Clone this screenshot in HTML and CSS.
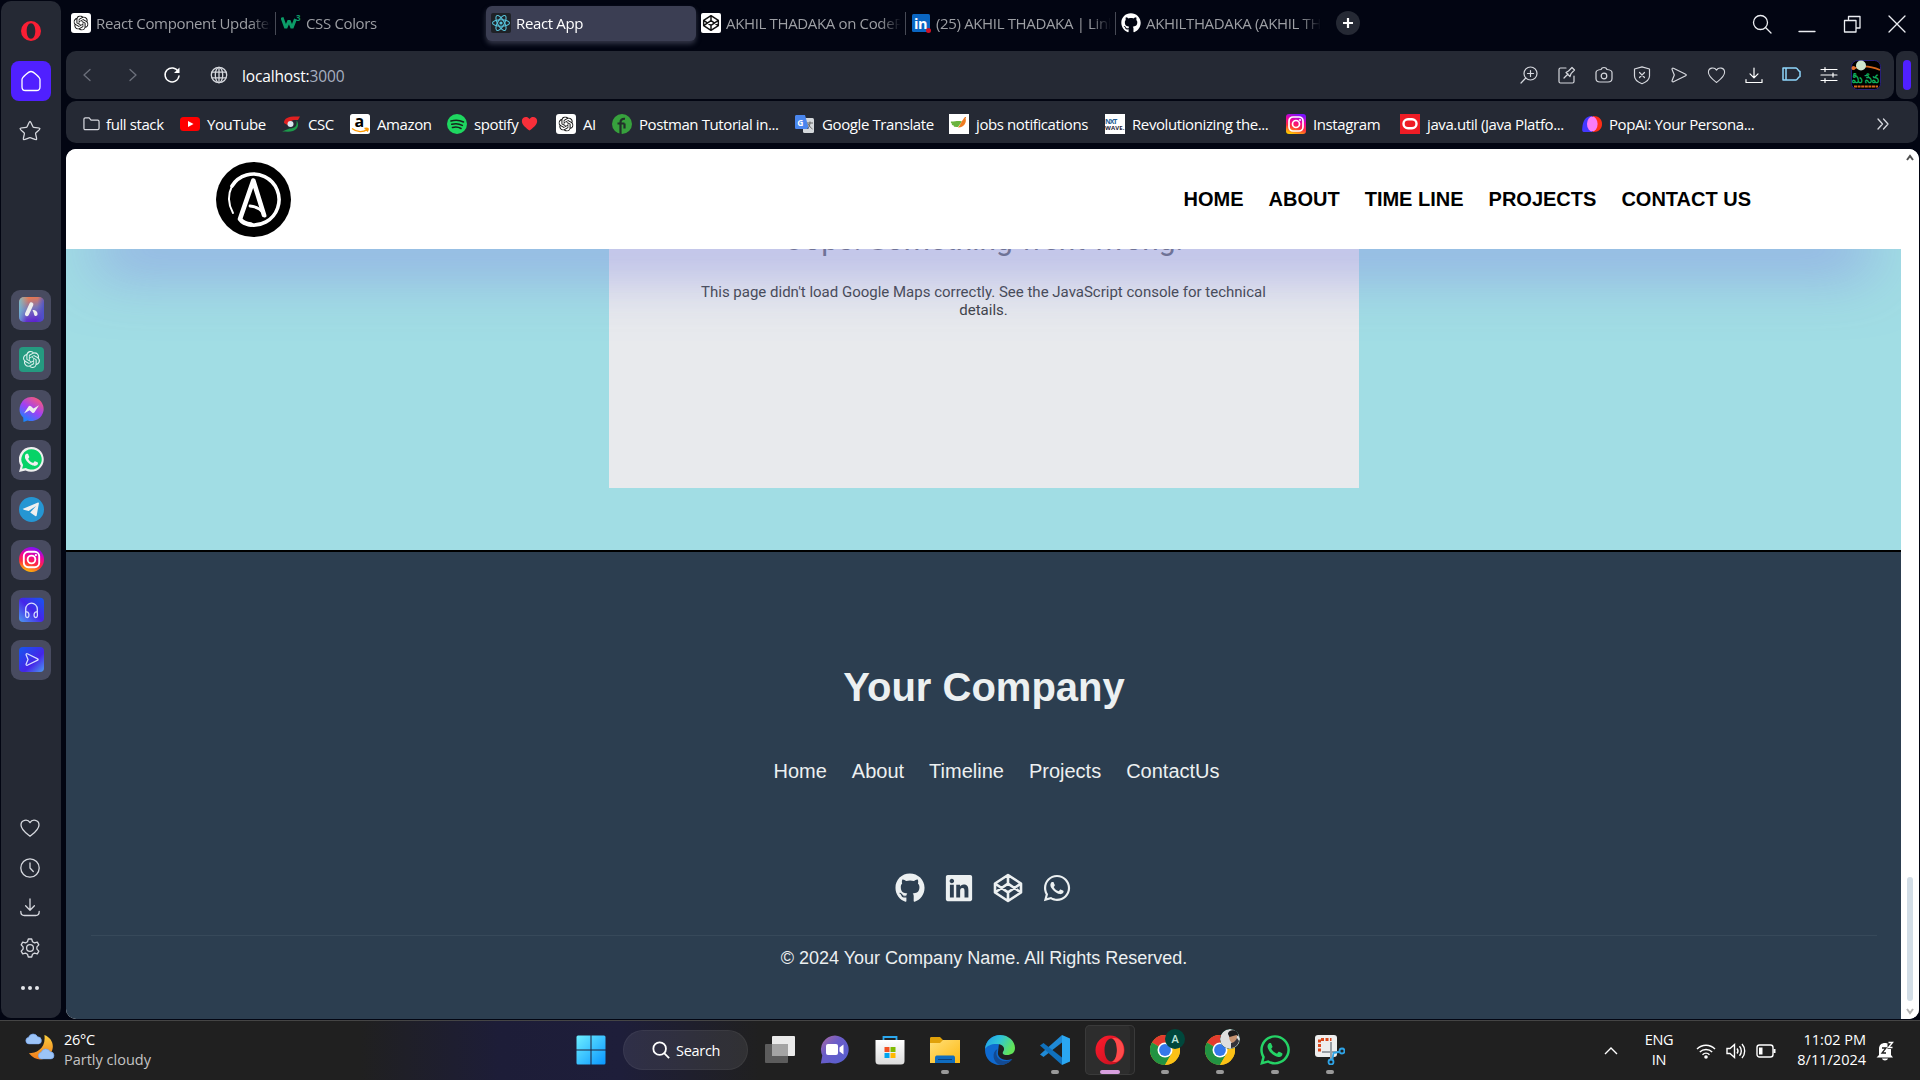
FILE: index.html
```html
<!DOCTYPE html>
<html lang="en">
<head>
<meta charset="utf-8">
<title>React App</title>
<link rel="stylesheet" href="styles.css">
</head>
<body>
<svg class="defs" width="0" height="0">
  <defs>
    <linearGradient id="g-insta" x1=".3" y1="1" x2=".6" y2="0"><stop offset="0" stop-color="#ffc800"/><stop offset=".35" stop-color="#ff2d3d"/><stop offset=".65" stop-color="#f0039c"/><stop offset="1" stop-color="#7a12ff"/></linearGradient>
    <linearGradient id="g-mess" x1=".2" y1="1" x2=".8" y2="0"><stop offset="0" stop-color="#0a8cff"/><stop offset=".5" stop-color="#a040f5"/><stop offset="1" stop-color="#ff5c70"/></linearGradient>
    <linearGradient id="g-aria" x1=".4" y1="0" x2=".6" y2="1"><stop offset="0" stop-color="#f0784a"/><stop offset=".45" stop-color="#7a78b8"/><stop offset="1" stop-color="#5c20d0"/></linearGradient>
    <linearGradient id="g-ariaL" x1="0" y1=".5" x2="1" y2=".6"><stop offset="0" stop-color="#6ec3d8" stop-opacity=".8"/><stop offset=".35" stop-color="#6ec3d8" stop-opacity="0"/><stop offset=".7" stop-color="#4c52c8" stop-opacity="0"/><stop offset="1" stop-color="#4c52c8"/></linearGradient>
    <linearGradient id="g-blue" x1="0" y1="1" x2="1" y2="0"><stop offset="0" stop-color="#4d9bf0"/><stop offset=".5" stop-color="#4525e8"/><stop offset="1" stop-color="#1558f0"/></linearGradient>
    <linearGradient id="g-blue2" x1="0" y1="0" x2="1" y2="1"><stop offset="0" stop-color="#1558f0"/><stop offset=".6" stop-color="#4525e8"/><stop offset="1" stop-color="#4d9bf0"/></linearGradient>
    <linearGradient id="g-win" gradientUnits="userSpaceOnUse" x1="0" y1="0" x2="30" y2="30"><stop offset="0" stop-color="#6ff0ff"/><stop offset="1" stop-color="#0794ff"/></linearGradient>
    <linearGradient id="g-teams" x1="0" y1="0" x2="1" y2="1"><stop offset="0" stop-color="#b06a9e"/><stop offset=".4" stop-color="#6a5cc8"/><stop offset="1" stop-color="#5560d0"/></linearGradient>
    <linearGradient id="g-folder" x1="0" y1="0" x2="1" y2="1"><stop offset="0" stop-color="#ffdf78"/><stop offset="1" stop-color="#fdb913"/></linearGradient>
    <linearGradient id="g-edge" x1="0" y1="0" x2="1" y2=".4"><stop offset="0" stop-color="#1f9bea"/><stop offset=".5" stop-color="#2fc4d8"/><stop offset="1" stop-color="#62e45a"/></linearGradient>
    <linearGradient id="g-opera" x1="0" y1="0" x2="1" y2="1"><stop offset="0" stop-color="#ff1b2d"/><stop offset="1" stop-color="#c0101e"/></linearGradient>
    <linearGradient id="g-moon" x1="0" y1="0" x2="0" y2="1"><stop offset="0" stop-color="#fccf3e"/><stop offset="1" stop-color="#f07a1a"/></linearGradient>
    <linearGradient id="g-store" x1="0" y1="0" x2="0" y2="1"><stop offset="0" stop-color="#fff"/><stop offset="1" stop-color="#dcdcdc"/></linearGradient>
    <symbol id="openai" viewBox="0 0 24 24"><path d="M22.2819 9.8211a5.9847 5.9847 0 0 0-.5157-4.9108 6.0462 6.0462 0 0 0-6.5098-2.9A6.0651 6.0651 0 0 0 4.9807 4.1818a5.9847 5.9847 0 0 0-3.9977 2.9 6.0462 6.0462 0 0 0 .7427 7.0966 5.98 5.98 0 0 0 .511 4.9107 6.051 6.051 0 0 0 6.5146 2.9001A5.9847 5.9847 0 0 0 13.2599 24a6.0557 6.0557 0 0 0 5.7718-4.2058 5.9894 5.9894 0 0 0 3.9977-2.9001 6.0557 6.0557 0 0 0-.7475-7.0729zm-9.022 12.6081a4.4755 4.4755 0 0 1-2.8764-1.0408l.1419-.0804 4.7783-2.7582a.7948.7948 0 0 0 .3927-.6813v-6.7369l2.02 1.1686a.071.071 0 0 1 .038.052v5.5826a4.504 4.504 0 0 1-4.4945 4.4944zm-9.6607-4.1254a4.4708 4.4708 0 0 1-.5346-3.0137l.142.0852 4.783 2.7582a.7712.7712 0 0 0 .7806 0l5.8428-3.3685v2.3324a.0804.0804 0 0 1-.0332.0615L9.74 19.9502a4.4992 4.4992 0 0 1-6.1408-1.6464zM2.3408 7.8956a4.485 4.485 0 0 1 2.3655-1.9728V11.6a.7664.7664 0 0 0 .3879.6765l5.8144 3.3543-2.0201 1.1685a.0757.0757 0 0 1-.071 0l-4.8303-2.7865A4.504 4.504 0 0 1 2.3408 7.872zm16.5963 3.8558L13.1038 8.364 15.1192 7.2a.0757.0757 0 0 1 .071 0l4.8303 2.7913a4.4944 4.4944 0 0 1-.6765 8.1042v-5.6772a.79.79 0 0 0-.407-.667zm2.0107-3.0231l-.142-.0852-4.7735-2.7818a.7759.7759 0 0 0-.7854 0L9.409 9.2297V6.8974a.0662.0662 0 0 1 .0284-.0615l4.8303-2.7866a4.4992 4.4992 0 0 1 6.6802 4.66zM8.3065 12.863l-2.02-1.1638a.0804.0804 0 0 1-.038-.0567V6.0742a4.4992 4.4992 0 0 1 7.3757-3.4537l-.142.0805L8.704 5.459a.7948.7948 0 0 0-.3927.6813zm1.0976-2.3654l2.602-1.4998 2.6069 1.4998v2.9994l-2.5974 1.4997-2.6067-1.4997Z"/></symbol>
    <symbol id="openai-tile" viewBox="0 0 20 20"><rect width="20" height="20" rx="3" fill="#fff"/><use href="#openai" x="2.5" y="2.5" width="15" height="15" fill="#111"/></symbol>
    <symbol id="codepen" viewBox="0 0 30 30"><path d="M15 2 28 10.5v9L15 28 2 19.500v-9zM15 2v8.700M15 28v-8.700M2 10.500 15 19.300 28 10.500M2 19.500 15 10.700 28 19.500" fill="none" stroke="currentColor" stroke-width="2.6" stroke-linejoin="round"/></symbol>
    <symbol id="send" viewBox="0 0 20 20"><path d="M4.500 3.300C3.600 2.800 2.700 3.600 3.100 4.600L5.300 10 3.100 15.400c-.4 1 .5 1.800 1.400 1.300L16.700 10.700c.7-.3.7-1.100 0-1.400z"/></symbol>
    <symbol id="heart" viewBox="0 0 20 20"><path d="M10 18.300C6.500 15.500 1 11.800 1 7 1 1.800 7.600.6 10 4.600 12.400.6 19 1.800 19 7c0 4.800-5.500 8.500-9 11.300z"/></symbol>
    <symbol id="whatsapp" viewBox="0 0 448 512"><path d="M380.9 97.1C339 55.1 283.2 32 223.9 32c-122.400 0-222 99.600-222 222 0 39.100 10.200 77.300 29.600 111L0 480l117.700-30.900c32.400 17.700 68.900 27 106.100 27h.1c122.300 0 224.100-99.600 224.100-222 0-59.300-25.200-115-67.100-157zm-157 341.600c-33.200 0-65.700-8.900-94-25.700l-6.700-4-69.800 18.300L72 359.200l-4.400-7c-18.500-29.400-28.200-63.300-28.200-98.200 0-101.700 82.800-184.500 184.600-184.500 49.300 0 95.600 19.200 130.400 54.100 34.800 34.900 56.200 81.200 56.100 130.500 0 101.800-84.900 184.600-186.600 184.600zm101.200-138.200c-5.500-2.800-32.800-16.200-37.900-18-5.100-1.900-8.800-2.800-12.500 2.800-3.700 5.600-14.300 18-17.600 21.800-3.200 3.700-6.500 4.200-12 1.400-32.600-16.300-54-29.100-75.500-66-5.700-9.800 5.700-9.100 16.300-30.300 1.800-3.700.9-6.900-.5-9.700-1.400-2.800-12.500-30.100-17.100-41.200-4.500-10.800-9.100-9.300-12.500-9.500-3.200-.2-6.900-.2-10.600-.2-3.700 0-9.700 1.400-14.800 6.900-5.100 5.600-19.400 19-19.400 46.300 0 27.300 19.900 53.700 22.600 57.400 2.800 3.700 39.100 59.700 94.800 83.800 35.200 15.200 49 16.500 66.600 13.900 10.700-1.600 32.800-13.400 37.400-26.400 4.600-13 4.600-24.100 3.200-26.400-1.300-2.500-5-3.900-10.500-6.600z"/></symbol>
    <symbol id="wa-phone" viewBox="110 140 240 240"><path d="M325.100 300.500c-5.500-2.800-32.800-16.200-37.900-18-5.100-1.900-8.800-2.800-12.500 2.800-3.700 5.600-14.300 18-17.600 21.800-3.200 3.700-6.500 4.200-12 1.400-32.600-16.300-54-29.100-75.500-66-5.700-9.800 5.700-9.100 16.300-30.300 1.800-3.700.9-6.900-.5-9.700-1.400-2.800-12.500-30.100-17.100-41.200-4.500-10.800-9.100-9.300-12.500-9.500-3.200-.2-6.900-.2-10.600-.2-3.700 0-9.700 1.400-14.800 6.900-5.100 5.600-19.400 19-19.400 46.300 0 27.300 19.900 53.700 22.600 57.400 2.800 3.700 39.100 59.700 94.800 83.800 35.200 15.200 49 16.500 66.600 13.900 10.700-1.600 32.800-13.400 37.400-26.400 4.600-13 4.600-24.100 3.200-26.400-1.300-2.500-5-3.900-10.500-6.600z"/></symbol>
    <symbol id="github" viewBox="0 0 496 512"><path d="M165.900 397.400c0 2-2.300 3.600-5.200 3.600-3.300.3-5.600-1.300-5.600-3.600 0-2 2.300-3.600 5.200-3.600 3-.3 5.600 1.300 5.600 3.600zm-31.100-4.500c-.7 2 1.300 4.300 4.300 4.900 2.600 1 5.600 0 6.200-2s-1.300-4.300-4.300-5.200c-2.600-.7-5.500.3-6.200 2.300zm44.200-1.700c-2.900.7-4.900 2.600-4.600 4.900.3 2 2.900 3.300 5.900 2.600 2.900-.7 4.900-2.600 4.600-4.600-.3-1.900-3-3.200-5.900-2.900zM244.800 8C106.100 8 0 113.300 0 252c0 110.900 69.800 205.800 169.500 239.200 12.800 2.300 17.300-5.600 17.300-12.100 0-6.200-.3-40.400-.3-61.400 0 0-70 15-84.700-29.800 0 0-11.400-29.100-27.800-36.600 0 0-22.900-15.700 1.600-15.400 0 0 24.900 2 38.600 25.800 21.900 38.600 58.600 27.500 72.900 20.900 2.300-16 8.800-27.100 16-33.700-55.900-6.200-112.300-14.300-112.300-110.500 0-27.500 7.600-41.300 23.600-58.900-2.600-6.500-11.100-33.300 2.600-67.900 20.900-6.500 69 27 69 27 20-5.600 41.500-8.500 62.800-8.500s42.800 2.900 62.800 8.500c0 0 48.100-33.600 69-27 13.700 34.700 5.200 61.400 2.600 67.900 16 17.700 25.800 31.500 25.800 58.900 0 96.500-58.900 104.200-114.800 110.500 9.200 7.900 17 22.900 17 46.400 0 33.700-.3 75.400-.3 83.600 0 6.500 4.600 14.400 17.300 12.100C428.200 457.800 496 362.900 496 252 496 113.300 383.500 8 244.800 8z"/></symbol>
    <symbol id="insta" viewBox="0 0 20 20"><g fill="none" stroke="#fff" stroke-width="1.700"><rect x="3" y="3" width="14" height="14" rx="4"/><circle cx="10" cy="10" r="3.500"/></g><circle cx="14" cy="6" r="1" fill="#fff"/></symbol>
    <symbol id="chrome" viewBox="0 0 30 30"><circle cx="15" cy="15" r="15" fill="#fbc116"/><path d="M15 15 2 7.500A15 15 0 0 1 28 7.500H15z" fill="#e33b2e"/><path d="M2 7.500A15 15 0 0 0 15 30L21.500 18.800 15 15z" fill="#229342"/><path d="M15 7.500H28A15 15 0 0 1 15 30l6.500-11.200z" fill="#fbc116"/><circle cx="15" cy="15" r="7.500" fill="#fff"/><circle cx="15" cy="15" r="5.900" fill="#3578ea"/></symbol>
    <symbol id="download" viewBox="0 0 20 20"><path d="M10 1v11M5.600 7.800 10 12.200l4.400-4.400M.8 13.500c0 3 1 4 3.500 4h11.400c2.500 0 3.500-1 3.500-4"/></symbol>
    <symbol id="magnify" viewBox="0 0 20 20"><circle cx="8.500" cy="8.500" r="7"/><path d="m13.500 13.500 5.500 5.500"/></symbol>
    <symbol id="cloud" viewBox="0 0 18 12"><path d="M4 11.500a3.600 3.600 0 0 1-.3-7.100A5 5 0 0 1 13 4a3.800 3.800 0 0 1 1 7.500z" fill="#9cc4f8" stroke="#76a4ec" stroke-width=".7"/></symbol>
  </defs>
</svg>
<div class="desktop">
  <div class="browser">
    <aside class="sidebar">
      <svg class="opera-mark" viewBox="0 0 20 20"><path fill="#fa1e34" fill-rule="evenodd" d="M10 0a10 10 0 1 0 0 20A10 10 0 0 0 10 0zm0 2.300c2.600 0 4.300 3.200 4.300 7.700s-1.700 7.700-4.300 7.700S5.700 14.500 5.700 10 7.400 2.300 10 2.300z"/></svg>
      <div class="home-btn"><svg class="line i22" viewBox="0 0 22 22"><path d="M2 9.500C2 7.500 8.500 1.500 11 1.500S20 7.500 20 9.500V17c0 2.500-1 3.500-3.500 3.500h-11C3 20.500 2 19.500 2 17z"/></svg></div>
      <svg class="line i22 star" viewBox="0 0 22 22"><path d="M11 1.500c1 0 2.600 5.200 3.300 5.700s6.300.3 6.600 1.300-4 3.900-4.300 4.800 1.700 5.700.9 6.300-5.300-2-6.500-2-5.700 2.600-6.500 2 1.200-5.400.9-6.300S.8 9.500 1.100 8.500s5.900-.8 6.600-1.300S10 1.500 11 1.500z"/></svg>
      <div class="apps">
        <div class="tile"><svg viewBox="0 0 25 25"><rect width="25" height="25" rx="5" fill="url(#g-aria)"/><rect width="25" height="25" rx="5" fill="url(#g-ariaL)"/><path d="M12.300 7.500 8 17" stroke="#eee" stroke-width="4.200" stroke-linecap="round"/><path d="M13.500 13c3-.5 5.500 2 5 4.500-.4 2-3 1.800-3.300.2-.3-1.800-1-3-1.700-4.700z" fill="#eee"/></svg></div>
        <div class="tile"><svg viewBox="0 0 25 25"><rect width="25" height="25" rx="4" fill="#259a80"/><use href="#openai" x="4" y="4" width="17" height="17" fill="#dff2ee"/></svg></div>
        <div class="tile"><svg viewBox="0 0 25 25"><path d="M12.500 0a12.300 12 0 1 1-4 23.400L4.500 25l-.3-4.500A12 12 0 0 1 12.500 0z" fill="url(#g-mess)"/><path d="M5 16.500 9.500 9.500c.7-.9 1.700-.9 2.500-.2l2.500 2.200 5.500-3.300-4.500 7c-.7.9-1.700.9-2.500.2l-2.500-2.200z" fill="#eee"/></svg></div>
        <div class="tile"><svg viewBox="0 0 25 25"><path d="M12.500 0A12.400 12.400 0 1 1 6.600 23.400L0 25l1.700-6.200A12.400 12.400 0 0 1 12.500 0z" fill="#efefef"/><path d="M12.500 2.200a10.200 10.200 0 1 1-5.600 18.700l-3.800.9 1-3.700A10.200 10.200 0 0 1 12.500 2.200z" fill="#06d367"/><use href="#wa-phone" x="5.800" y="6" width="14" height="14" fill="#efefef"/></svg></div>
        <div class="tile"><svg viewBox="0 0 25 25"><circle cx="12.500" cy="12.500" r="12.500" fill="#2596d3"/><path d="M3.500 12 19 5.600c.6-.2 1 .1.900.8l-2.200 12c-.2.900-.8 1-1.500.5l-5-3.500 6-6.500-7.500 5-5-1.200c-.8-.2-.8-.5 0-.7z" fill="#efefef"/></svg></div>
        <div class="tile"><svg viewBox="0 0 25 25"><circle cx="12.500" cy="12.500" r="12.500" fill="url(#g-insta)"/><use href="#insta" x="1.500" y="1.500" width="22" height="22"/></svg></div>
        <div class="tile"><svg viewBox="0 0 25 25"><rect y=".8" width="25" height="24.200" rx="4" fill="url(#g-blue)"/><path d="M6.700 15.500V12a5.800 5.800 0 0 1 11.600 0v3.500M6.700 15c3.700-1.500 4.200 5.500 1.700 5.500S6.700 17 6.700 15zM18.300 15c-3.700-1.500-4.200 5.500-1.700 5.500s1.700-3.500 1.700-5.500z" fill="none" stroke="#d5ddff" stroke-width="1.300"/></svg></div>
        <div class="tile"><svg viewBox="0 0 25 25"><rect width="25" height="25" rx="4" fill="url(#g-blue2)"/><use href="#send" x="4.500" y="4" width="17" height="17" fill="none" stroke="#d5ddff" stroke-width="1.500"/></svg></div>
      </div>
      <div class="side-tools">
        <svg class="line i20"><use href="#heart"/></svg>
        <svg class="line i20" viewBox="0 0 20 20"><circle cx="10" cy="10" r="9.200"/><path d="M10 5v5l3.300 3.500"/></svg>
        <svg class="line i20"><use href="#download"/></svg>
        <svg class="line i20" viewBox="0 0 20 20"><path d="M8.300 1h3.400l.8 2.800 2 1.100 2.800-.8 1.500 2.800-1.900 2v2.200l1.900 2-1.500 2.800-2.800-.8-2 1.100-.8 2.800H8.300l-.8-2.800-2-1.100-2.800.8-1.500-2.800 1.900-2V8.900l-1.900-2 1.500-2.800 2.800.8 2-1.100z"/><circle cx="10" cy="10" r="3.400"/></svg>
        <svg class="i20" viewBox="0 0 20 20" fill="#e4e5e9"><circle cx="3" cy="10" r="2"/><circle cx="10" cy="10" r="2"/><circle cx="17" cy="10" r="2"/></svg>
      </div>
    </aside>
    <div class="window">
      <div class="tabs">
        <div class="tab sep"><svg class="fav"><use href="#openai-tile"/></svg><span>React Component Updates</span></div>
        <div class="tab"><svg class="fav" viewBox="0 0 20 20"><path d="M1 4.500 4.800 15 8 7.500 11 15 14.500 6" fill="none" stroke="#0c9c68" stroke-width="3" stroke-linejoin="bevel"/><text x="15" y="8" font-size="8" font-weight="bold" fill="#0c9c68" font-family="Open Sans">3</text></svg><span>CSS Colors</span></div>
        <div class="tab active"><svg class="fav" viewBox="0 0 20 20"><rect width="20" height="20" rx="2" fill="#1f2227"/><g fill="none" stroke="#58c4dc" stroke-width="1.100"><ellipse cx="10" cy="10" rx="8.500" ry="3.300"/><ellipse cx="10" cy="10" rx="8.500" ry="3.300" transform="rotate(60 10 10)"/><ellipse cx="10" cy="10" rx="8.500" ry="3.300" transform="rotate(120 10 10)"/></g><circle cx="10" cy="10" r="1.600" fill="#58c4dc"/></svg><span>React App</span></div>
        <div class="tab sep"><svg class="fav" viewBox="0 0 20 20"><rect width="20" height="20" rx="2" fill="#fff"/><use href="#codepen" x="1.500" y="1.500" width="17" height="17" color="#111"/></svg><span>AKHIL THADAKA on CodePen</span></div>
        <div class="tab sep"><svg class="fav" viewBox="0 0 20 20"><rect x="1" y="1" width="18" height="18" rx="1.500" fill="#0a66c2"/><text x="3" y="15.500" font-size="14.500" font-weight="bold" fill="#fff" font-family="Open Sans">in</text><circle cx="17.500" cy="17.500" r="2.500" fill="#d11124"/></svg><span>(25) AKHIL THADAKA | LinkedIn</span></div>
        <div class="tab"><svg class="fav" fill="#fff"><use href="#github"/></svg><span>AKHILTHADAKA (AKHIL THADAKA)</span></div>
        <div class="new-tab"><svg viewBox="0 0 24 24" stroke="#fff" stroke-width="2.200"><path d="M12 7v10M7 12h10"/></svg></div>
        <div class="controls">
          <svg class="line" viewBox="0 0 20 20"><use href="#magnify"/></svg>
          <svg class="line" viewBox="0 0 20 20"><path d="M2 17.500h16"/></svg>
          <svg class="line" viewBox="0 0 20 20"><path d="M2.500 6.500h11.500v11.500H2.500zM6.500 6.500V2.500H18v11.500h-4"/></svg>
          <svg class="line" viewBox="0 0 20 20"><path d="m2 2 16 16M18 2 2 18"/></svg>
        </div>
      </div>
      <div class="toolbar-row">
        <div class="toolbar">
          <svg class="line dim nav-ic" viewBox="0 0 20 20"><path d="M13 4.500 7 10l6 5.500"/></svg>
          <svg class="line dim nav-ic" viewBox="0 0 20 20"><path d="m7 4.500 6 5.500-6 5.500"/></svg>
          <svg class="line reload" viewBox="0 0 20 20"><path d="M16.200 6.500A7 7 0 1 0 17 11" stroke-width="1.500"/><path d="M17.500 2.500V8H12z" fill="#fff" stroke="none"/></svg>
          <svg class="line globe" viewBox="0 0 20 20"><circle cx="10" cy="10" r="7.700"/><ellipse cx="10" cy="10" rx="3.700" ry="7.700"/><path d="M10 2.300v15.400M3 7.200h14M3 12.800h14"/></svg>
          <div class="url"><span class="host">localhost:</span><span class="port">3000</span></div>
          <div class="actions">
            <svg class="line" viewBox="0 0 20 20"><circle cx="11.500" cy="8.500" r="6.500"/><path d="M6.800 13 2 18M11.500 5.500v6M8.500 8.500h6"/></svg>
            <svg class="line" viewBox="0 0 20 20"><path d="M9 3H3.500C2.500 3 2 3.500 2 4.500v12c0 1 .5 1.500 1.500 1.500h12c1 0 1.500-.5 1.500-1.500V11M7 13l4-4M9 7.500l4 4 1-2.800L17.500 5 15 2.500 11.500 6z"/></svg>
            <svg class="line" viewBox="0 0 20 20"><path d="M7 4.500c.5-1.500 1-2 3-2s2.500.5 3 2c3.500.3 5 .7 5 3v6c0 2.500-1.500 3.500-4 3.500H6c-2.500 0-4-1-4-3.500v-6c0-2.300 1.500-2.700 5-3z"/><circle cx="10" cy="11" r="2.800"/></svg>
            <svg class="line" viewBox="0 0 20 20"><path d="M10 1.800 17.500 4v7c0 3.500-4.500 6.500-7.500 7.700C7 17.500 2.500 14.500 2.500 11V4zM7.500 7.500l5 5M12.500 7.500l-5 5"/></svg>
            <svg class="line"><use href="#send"/></svg>
            <svg class="line"><use href="#heart" x="0" y="1" width="19" height="18"/></svg>
            <svg class="line white" viewBox="0 0 20 20"><path d="M10 3v9.500M6 8.800l4 4 4-4M2 14.500v3h16v-3"/></svg>
            <svg class="line sky" viewBox="0 0 20 20"><path d="M1 3h13c1.500 0 1.800 3 4 3.500v5c-2.200.5-2.500 3.500-4 3.500H1zM4 3v12" stroke-width="1.500"/></svg>
            <svg class="line white" viewBox="0 0 20 20"><path d="M2 4.500h16M2 10h16M2 15.500h16M6 2.500v4M14 8v4M6 13.500v4"/></svg>
          </div>
          <svg class="avatar" viewBox="0 0 30 30"><rect x=".5" y=".5" width="29" height="29" rx="6" fill="#000" stroke="#28207a"/><path d="M1 9C12 4 22 7 29 10" fill="none" stroke="#d8661c" stroke-width="1.800"/><circle cx="10" cy="5.500" r="5" fill="#cfe6cf"/><circle cx="2.500" cy="8" r="2" fill="#e07030"/><text x="1" y="23" font-size="11.500" font-weight="bold" fill="#0fae5c" textLength="27" lengthAdjust="spacingAndGlyphs">మీ సేవ</text><path d="M3 26.500h24" stroke="#d8661c" stroke-width="2" stroke-dasharray="3 .6"/></svg>
        </div>
        <div class="side-toggle"><i></i></div>
      </div>
      <div class="bookmarks">
        <div class="bm"><svg class="line folder" viewBox="0 0 18 18"><path d="M1 4c0-1 .5-1.500 1.500-1.500h4L8.500 5h7c1 0 1.500.5 1.500 1.500v7c0 1-.5 1.500-1.500 1.500h-13c-1 0-1.500-.5-1.500-1.500z"/></svg><span>full stack</span></div>
        <div class="bm"><svg viewBox="0 0 20 20"><rect y="3" width="20" height="14" rx="3.500" fill="#f00"/><path d="m8 7 5.500 3L8 13z" fill="#fff"/></svg><span>YouTube</span></div>
        <div class="bm"><svg viewBox="0 0 20 20"><path d="M3 9C3 3 9 2 19 2.500L17 6c-6 0-8 0-9 6z" fill="#e02020"/><path d="M1 17.500c4 0 8 .5 11-.5 6-2 6-8 3.500-10.500 1 6-2 8-7 8z" fill="#1d9a4b"/><circle cx="9.500" cy="10" r="3" fill="#dce6f0"/></svg><span>CSC</span></div>
        <div class="bm"><svg viewBox="0 0 20 20"><rect width="20" height="20" rx="2.500" fill="#fff"/><text x="4.500" y="13" font-size="16" font-weight="bold" font-family="Open Sans" fill="#000">a</text><path d="M2 14.500c5 4 11 4 15.500.8M14.500 14.500c1.500-.3 3-.5 3.500 0s-.2 2-.8 3" fill="none" stroke="#f90" stroke-width="1.500"/></svg><span>Amazon</span></div>
        <div class="bm"><svg viewBox="0 0 20 20"><circle cx="10" cy="10" r="10" fill="#1ed760"/><path d="M4 7c4-1.200 9-.8 12.500 1M4.800 10.300c3.500-1 7.500-.6 10.500 1.100M5.500 13.500c3-.8 6-.5 8.500 1" fill="none" stroke="#16251c" stroke-width="1.600" stroke-linecap="round"/></svg><span>spotify</span><svg class="red-heart" viewBox="0 0 20 20"><use href="#heart" fill="#f92f3a"/></svg></div>
        <div class="bm"><svg><use href="#openai-tile"/></svg><span>AI</span></div>
        <div class="bm"><svg viewBox="0 0 20 20"><circle cx="10" cy="10" r="10" fill="#37a13d"/><path d="M8.500 20V8.500C8.500 6 10 4.500 13 4.800M5.500 9.500h7M12.500 9.500v5" fill="none" stroke="#22302a" stroke-width="2.200"/></svg><span>Postman Tutorial in...</span></div>
        <div class="bm"><svg viewBox="0 0 20 20"><rect x="8" y="4" width="11" height="15" rx="1.500" fill="#d5d8dc"/><path d="M1.500 1H10l4 14H1.500C.7 15 0 14.500 0 13.500v-11C0 1.500.7 1 1.500 1z" fill="#4a86ee"/><text x="2.200" y="11.500" font-size="8.500" font-weight="bold" font-family="Open Sans" fill="#fff">G</text><path d="M12 9h6M15 7.500V9c0 3-2 5-3 6M13 10c1 2 3 4 4.500 5" stroke="#666" fill="none"/></svg><span>Google Translate</span></div>
        <div class="bm"><svg viewBox="0 0 20 20"><rect width="20" height="20" fill="#fff"/><path d="M2 7.500c5 0 7-1 11 0L9 13c-3 0-5-.5-4-1.500-2 0-3-1.500-1.500-1.500C2 9.500 1.500 8 2 7.500z" fill="#6ab43e"/><path d="M9 13.500c3-3 3-6 5.500-8.500C16 2 18 3 16.500 4.500 18 8 15 14 9 13.500z" fill="#ee7b22"/></svg><span>jobs notifications</span></div>
        <div class="bm"><svg viewBox="0 0 20 20"><rect width="20" height="20" fill="#fff"/><g font-family="Open Sans" font-weight="bold" font-size="7" fill="#245c94"><text x="0" y="9.500" textLength="12">NXT</text><text x="0" y="15.500" textLength="19" font-size="6" fill="#223">WAVE.</text></g></svg><span>Revolutionizing the...</span></div>
        <div class="bm"><svg viewBox="0 0 20 20"><rect width="20" height="20" rx="3" fill="url(#g-insta)"/><use href="#insta"/></svg><span>Instagram</span></div>
        <div class="bm"><svg viewBox="0 0 20 20"><rect width="20" height="20" fill="#ee1c25"/><rect x="3.500" y="5.300" width="13" height="9" rx="4.500" fill="none" stroke="#fff" stroke-width="2.400"/></svg><span>java.util (Java Platfo...</span></div>
        <div class="bm"><svg viewBox="0 0 20 20"><path d="M10 2v16H2c-2 0-2-2-1.700-4C1 7 3 2 10 2z" fill="#4338ff"/><path d="M11 2c6 0 9 3.500 9 8s-3 8-9 8z" fill="#ff2d16"/><ellipse cx="10.300" cy="10" rx="5.300" ry="7.500" fill="#f97cf8"/></svg><span>PopAi: Your Persona...</span></div>
        <svg class="line more" viewBox="0 0 14 14"><path d="m2 2 4.500 5L2 12M7.500 2 12 7l-4.500 5"/></svg>
      </div>
      <div class="viewport">
        <div class="page">
          <nav class="site-nav">
            <svg class="logo" viewBox="0 0 75 75"><circle cx="37.500" cy="37.500" r="37.500"/><g fill="none" stroke="#fff" stroke-linejoin="round" stroke-linecap="round"><path d="M16 24A25.500 25.500 0 1 1 32 62.500" stroke-width="3.600"/><path d="M17 51C12.500 43 11.500 33 16 24" stroke-width="2"/><path d="M48 53 37.300 18.500 24 57c2 3 6 5 11 5.500" stroke-width="4.600"/><path d="M49 54C47 48.500 41 44.500 34 44" stroke-width="2.800"/></g></svg>
            <div class="site-links"><a>HOME</a><a>ABOUT</a><a>TIME LINE</a><a>PROJECTS</a><a>CONTACT US</a></div>
          </nav>
          <section class="contact">
            <div class="map"><div class="map-title">Oops! Something went wrong.</div><p>This page didn't load Google Maps correctly. See the JavaScript console for technical details.</p></div>
          </section>
          <footer class="footer">
            <h1>Your Company</h1>
            <div class="foot-links"><a>Home</a><a>About</a><a>Timeline</a><a>Projects</a><a>ContactUs</a></div>
            <div class="social">
              <svg class="gh"><use href="#github"/></svg>
              <svg class="li" viewBox="0 0 448 512"><path d="M416 32H31.900C14.300 32 0 46.500 0 64.300v383.400C0 465.500 14.300 480 31.900 480H416c17.600 0 32-14.500 32-32.300V64.300c0-17.800-14.400-32.300-32-32.300zM135.400 416H69V202.200h66.500V416zm-33.200-243c-21.300 0-38.500-17.300-38.500-38.500S80.900 96 102.200 96c21.200 0 38.500 17.300 38.500 38.500 0 21.300-17.200 38.500-38.500 38.500zm282.100 243h-66.400V312c0-24.800-.5-56.700-34.500-56.700-34.600 0-39.900 27-39.900 54.900V416h-66.400V202.200h63.700v29.200h.9c8.900-16.800 30.600-34.500 62.900-34.500 67.200 0 79.700 44.300 79.700 101.900V416z"/></svg>
              <svg class="cp"><use href="#codepen"/></svg>
              <svg class="wa"><use href="#whatsapp"/></svg>
            </div>
            <div class="copy">© 2024 Your Company Name. All Rights Reserved.</div>
          </footer>
        </div>
        <div class="scrollbar">
          <svg viewBox="0 0 10 10" stroke="#505050"><path d="M2 7l3-4 3 4"/></svg>
          <i></i>
          <svg viewBox="0 0 10 10" stroke="#b5b5b5"><path d="M2 3l3 4 3-4"/></svg>
        </div>
      </div>
    </div>
  </div>
  <div class="taskbar">
    <div class="weather">
      <svg viewBox="0 0 32 30"><path d="M20 2C28 5 31 13 27 20.500S12 31 4 21c8 0 18-5 16-19z" fill="url(#g-moon)"/><use href="#cloud" x="0" y="0" width="18" height="12"/><use href="#cloud" x="13" y="15.500" width="18" height="12"/></svg>
      <div><b>26°C</b><span>Partly cloudy</span></div>
    </div>
    <div class="dock">
      <div class="app"><svg viewBox="0 0 30 30"><path d="M.5 2a1.500 1.500 0 0 1 1.500-1.500h12.500v14H.5zM15.500.5H28A1.500 1.500 0 0 1 29.500 2v12.500h-14zM.5 15.500h14v14H2A1.500 1.500 0 0 1 .5 28zM15.500 15.500h14V28a1.500 1.500 0 0 1-1.500 1.500H15.500z" fill="url(#g-win)"/></svg></div>
      <div class="search"><svg viewBox="0 0 20 20" fill="none" stroke="#fff" stroke-width="2"><use href="#magnify"/></svg><span>Search</span></div>
      <div class="app"><svg viewBox="0 0 30 30"><rect x="7" y="1" width="23" height="20" rx="1" fill="#eaeaea"/><rect y="9" width="23" height="19" rx="1" fill="#5c5c5c"/><path d="M7 9h16v12H7z" fill="#a4a4a4"/></svg></div>
      <div class="app"><svg viewBox="0 0 30 30"><path d="M15 .5a14 14 0 1 1-5 27.200L.8 28.500l1.500-8A14 14 0 0 1 15 .5z" fill="url(#g-teams)"/><rect x="6" y="9" width="12" height="11" rx="2" fill="#fff"/><path d="m19.500 12.500 4-3v10l-4-3z" fill="#fff"/></svg></div>
      <div class="app"><svg viewBox="0 0 30 30"><path d="M8.500 6V2h13v4" fill="none" stroke="#2ba8ee" stroke-width="1.800"/><path d="M.5 5h29v21a3.500 3.500 0 0 1-3.500 3.500H4A3.500 3.500 0 0 1 .5 26z" fill="url(#g-store)"/><path d="M9.500 12h5v5h-5z" fill="#f25022"/><path d="M15.500 12h5v5h-5z" fill="#7fba00"/><path d="M9.500 18h5v5h-5z" fill="#00a4ef"/><path d="M15.500 18h5v5h-5z" fill="#ffb900"/></svg></div>
      <div class="app run"><svg viewBox="0 0 30 30"><path d="M0 3.500C0 2.500.5 2 1.500 2h8.500l3 3H30v10H0z" fill="#e0a10a"/><path d="M0 8h10l3-3h17v23H0z" fill="url(#g-folder)"/><path d="M5 28v-5c0-2 1-2.500 2.500-2.500h15c1.500 0 2.500.5 2.500 2.500v5z" fill="#0f6cbf"/><path d="M8 24.500h14" stroke="#0a3f7a"/></svg></div>
      <div class="app"><svg viewBox="0 0 30 30"><path d="M15 0C6.500 0 0 6.500 0 15s6.500 15 15 15c5 0 9.500-2.500 12-6-9 3-15-2-14-7z" fill="#0f6ad0"/><path d="M12.500 14c-3 5 0 12 8 12 4 0 6-1.500 7-2-3 4-8 6-12.500 6C8 28 6 17 12.500 14z" fill="#134a92"/><path d="M0 14C1 5 8 0 15 0c9 0 15 6.500 15 13 0 5-4 7-8 7-4.500 0-5-2-3.500-4 2-3-1-7.500-7-7C5.500 9 2 11 0 14z" fill="url(#g-edge)"/></svg></div>
      <div class="app run"><svg viewBox="0 0 30 30"><path d="M22 0 30 3.500v23L22 30z" fill="#2aa7f2"/><path d="M22 7.500 3.500 22 0 19.500 22 0z" fill="#1f8ad6"/><path d="M22 22.500 3.500 8 0 10.500 22 30z" fill="#1071bd"/></svg></div>
      <div class="app run current"><svg viewBox="0 0 30 30"><path fill="url(#g-opera)" fill-rule="evenodd" d="M15 .5a14.500 14.500 0 1 0 0 29 14.500 14.500 0 0 0 0-29zm1 3c3.500 0 6 5 6 11.500S19.500 26.500 16 26.500 9.500 21.500 9.500 15 12.500 3.500 16 3.500z"/><path d="M17 3.300c2-.6 4-.5 5.500.3C31 8 31 22 22.500 26.400c-1.500.8-3.500.9-5.500.3C23.500 25 23.500 5 17 3.300z" fill="#ff4b4b"/></svg></div>
      <div class="app run"><svg viewBox="0 0 30 30"><use href="#chrome"/></svg><em class="badge">A</em></div>
      <div class="app run"><svg viewBox="0 0 30 30"><use href="#chrome"/></svg><em class="badge photo"><svg viewBox="0 0 20 20"><circle cx="10" cy="10" r="10" fill="#dedede"/><path d="M9 3c4-3 8 0 8 4 0 3-1 6-3 8-3-1-5-4-5-8z" fill="#c69270"/><path d="M8 5c0-5 11-6 10.500 2.500l-2-1.500L9.500 8z" fill="#1b1b1d"/><path d="M11 14c3 0 5-3 6-5l2 3c-1 4-4 7-8 7z" fill="#34343a"/></svg></em></div>
      <div class="app run"><svg viewBox="0 0 30 30" fill="#25d366"><use href="#whatsapp" x="-1" y="-2" width="32" height="34"/></svg></div>
      <div class="app run"><svg viewBox="0 0 30 30"><rect width="22" height="22" rx="3" fill="#eee"/><path d="M4.500 16.500v-12h12" fill="none" stroke="#d9481c" stroke-width="3" stroke-dasharray="3 1.500"/><path d="M16 7v17M7 17h17" stroke="#9a9fa5" stroke-width="2"/><g fill="none" stroke="#2ea3e6" stroke-width="1.800"><circle cx="27" cy="16" r="2.500"/><circle cx="16" cy="27" r="2.500"/><path d="m24 17-6 1M17.500 24l1-6"/></g></svg></div>
    </div>
    <div class="tray">
      <svg class="chev" viewBox="0 0 14 14"><path d="m1 10 6-6 6 6"/></svg>
      <div class="lang"><span>ENG</span><span>IN</span></div>
      <svg class="tr" viewBox="0 0 20 20"><path d="M1 8a12.700 12.700 0 0 1 18 0M3.800 11a8.800 8.800 0 0 1 12.400 0M6.500 13.700a5 5 0 0 1 7 0"/><circle cx="10" cy="16" r="1.800" fill="#fff" stroke="none"/></svg>
      <svg class="tr" viewBox="0 0 20 20"><path d="M1 7.500v5h3l4.500 4V3.500l-4.500 4zM11 7.500a4 4 0 0 1 0 5M13.500 5.300a7 7 0 0 1 0 9.400M16 3a10.500 10.500 0 0 1 0 14"/></svg>
      <svg class="tr" viewBox="0 0 20 20"><rect x="1" y="4" width="16" height="12" rx="2.500"/><path d="M3 6.500h3.500v7H3z" fill="#fff" stroke="none"/><path d="M18.500 8v4" stroke-width="2"/></svg>
      <div class="clock"><span>11:02 PM</span><span>8/11/2024</span></div>
      <svg class="bell" viewBox="0 0 18 20"><path d="M3 14V8c0-4 2.500-6 6-6 1.500 0 2 .3 2.500.5V8H15v6l2 2.500H.5zM6 17.500h6c-.5 2.500-5.500 2.500-6 0z" fill="#fff"/><path d="M6 7h4l-4 5h4" fill="none" stroke="#202020" stroke-width="1.300"/><path d="M12.500 1.500h4l-4 5h4" fill="none" stroke="#fff" stroke-width="1.400"/></svg>
    </div>
  </div>
</div>
</body>
</html>
```
FILE: styles.css
```css
* { box-sizing: border-box; }
body { margin: 0; background: #020512; font-family: "Open Sans", "Noto Sans", sans-serif; overflow: hidden; }
.defs { position: absolute; }
svg { display: block; flex: none; }
.desktop { width: 1920px; height: 1080px; display: flex; flex-direction: column; }
.browser { height: 1020px; display: flex; gap: 5px; padding-left: 1px; }
.line { fill: none; stroke: #d6d8de; stroke-width: 1.3; stroke-linecap: round; stroke-linejoin: round; }
.line.white { stroke: #fff; }
.line.sky { stroke: #8fd6fb; }
.line.dim { stroke: #6c707b; }
.i22 { width: 22px; height: 22px; }
.i20 { width: 20px; height: 20px; }

.sidebar { width: 60px; height: 1017px; margin-top: 1px; background: #252934; border-radius: 10px; display: flex; flex-direction: column; align-items: center; padding: 19px 1px 0 0; }
.opera-mark { width: 20px; height: 20px; margin-top: 1px; }
.home-btn { width: 40px; height: 40px; margin-top: 20px; background: #5020ff; border-radius: 8px; display: flex; align-items: center; justify-content: center; }
.home-btn .line { stroke: #fff; }
.star { margin: 19px 1px 0 0; }
.apps { display: flex; flex-direction: column; gap: 10px; margin-top: 148px; }
.tile { width: 40px; height: 40px; background: #484b60; border-radius: 9px; padding: 7px 0 0 8px; }
.tile svg { width: 25px; height: 25px; }
.side-tools { display: flex; flex-direction: column; gap: 20px; margin: 138px 1px 0 0; }

.window { width: 1854px; display: flex; flex-direction: column; }
.tabs { height: 51px; display: flex; align-items: flex-start; padding-top: 6px; }
.tab { width: 210px; height: 35px; display: flex; align-items: center; gap: 5px; padding: 0 5px 1px; position: relative; color: #9d9fa4; font-size: 15px; letter-spacing: -.35px; white-space: nowrap; border-radius: 6px; }
.tab span { flex: 1; overflow: hidden; -webkit-mask-image: linear-gradient(90deg, #000 88%, transparent); mask-image: linear-gradient(90deg, #000 88%, transparent); }
.tab.sep::after { content: ""; position: absolute; right: 0; top: 6px; width: 1px; height: 23px; background: #474a55; }
.tab.active { background: #3b3e53; color: #fff; box-shadow: 0 3px 5px rgba(90, 93, 115, .55); }
.fav { width: 20px; height: 20px; }
.new-tab { width: 24px; height: 24px; margin: 5px 0 0 10px; border-radius: 50%; background: #252934; }
.controls { margin-left: auto; display: flex; gap: 25px; padding: 8px 13px 0 0; }
.controls svg { width: 20px; height: 20px; }
.controls .line { stroke: #eceef2; }

.toolbar-row { display: flex; gap: 2px; height: 48px; }
.toolbar { width: 1828px; background: #252934; border-radius: 10px; display: flex; align-items: center; padding-left: 11px; }
.nav-ic { width: 20px; height: 20px; margin-right: 26px; }
.reload { width: 20px; height: 20px; margin-left: -7px; }
.reload.line { stroke: #fff; }
.globe { width: 20px; height: 20px; margin-left: 27px; }
.url { margin: 1px 0 0 13px; font-size: 15.500px; letter-spacing: -.15px; }
.host { color: #fff; }
.port { color: #a7afc0; }
.actions { display: flex; gap: 17.500px; margin-left: auto; }
.actions svg { width: 20px; height: 20px; }
.actions .line { stroke-width: 1.200; }
.avatar { width: 30px; height: 30px; margin: 0 13px 0 12px; }
.side-toggle { width: 22px; background: #252934; border-radius: 8px; display: flex; align-items: center; justify-content: center; }
.side-toggle i { width: 8px; height: 30px; border-radius: 4px; background: #5020ff; }

.bookmarks { height: 42px; margin-top: 2px; width: 1852px; background: #252934; border-radius: 10px; display: grid; grid-template-columns: 97px 101px 69px 97px 109px 56px 183px 154px 156px 181px 114px 182px 1fr 14px; align-items: center; padding: 3px 28px 0 17px; }
.bm { display: flex; align-items: center; gap: 7px; color: #fff; font-size: 15px; letter-spacing: -.4px; white-space: nowrap; }
.bm svg { width: 20px; height: 20px; }
.bm .folder { width: 17px; height: 18px; margin-right: -1px; }
.bm .red-heart { width: 17px; height: 17px; margin-left: -4px; }
.more { width: 14px; height: 14px; }

.viewport { margin-top: 6px; height: 870px; width: 1853px; border-radius: 10px; overflow: hidden; display: flex; background: #fff; font-family: "Liberation Sans", Arial, sans-serif; }
.page { width: 1835px; height: 870px; overflow: hidden; display: flex; flex-direction: column; }
.site-nav { height: 100px; flex: none; background: #fff; position: relative; z-index: 2; display: flex; align-items: center; justify-content: space-between; padding: 0 150px; box-shadow: 0 50px 60px -30px rgba(137, 142, 228, .76); }
.logo { width: 75px; height: 75px; }
.site-links { display: flex; gap: 25px; font-weight: bold; font-size: 20px; color: #000; }
.contact { height: 301px; flex: none; background: #a1dde4; display: flex; align-items: flex-end; justify-content: center; padding-bottom: 62px; }
.map { width: 750px; height: 300px; flex: none; background: #e8eaed; font-family: Roboto, sans-serif; text-align: center; color: #3c4043; padding: 32px 90px 0; }
.map-title { font-size: 30px; line-height: 40px; height: 40px; color: #5f6368; }
.map p { font-size: 15px; line-height: 18px; margin: 23px 0 0; }
.footer { flex: 1; border-top: 2px solid #000; background: #2c3e50; color: #ecf0f1; display: flex; flex-direction: column; align-items: center; padding: 0 24px 0 25px; }
.footer h1 { margin: 112px 0 0; font-size: 40px; line-height: 46px; }
.foot-links { display: flex; gap: 25px; font-size: 20px; line-height: 24px; margin: 49px 0 0 25px; }
.social { display: flex; align-items: center; gap: 20px; margin: 90px 2px 0 0; height: 30px; fill: #ecf0f1; color: #ecf0f1; }
.gh, .cp { width: 30px; height: 30px; }
.li, .wa { width: 28px; height: 30px; }
.copy { margin-top: 32px; border-top: 1px solid #37495a; align-self: stretch; text-align: center; padding-top: 12px; font-size: 18px; line-height: 21px; }
.scrollbar { width: 18px; background: #fff; display: flex; flex-direction: column; align-items: center; padding: 4px 0 3px; }
.scrollbar svg { width: 10px; height: 10px; fill: none; stroke-width: 2; }
.scrollbar i { width: 6px; height: 124px; margin: auto 0 5px; background: #d2dde6; border-radius: 3px; }

.taskbar { height: 60px; border-top: 1px solid #454545; background: linear-gradient(90deg, #202020 360px, #1d1d38 500px, #1e1e3a 620px, #202020 760px); display: flex; color: #fff; font-size: 14.500px; letter-spacing: -.3px; }
.weather { display: flex; width: 559px; padding: 12px 0 0 25px; gap: 8px; }
.weather svg { width: 31px; height: 29px; }
.weather div, .lang, .clock { display: flex; flex-direction: column; line-height: 20px; }
.weather b { font-weight: 400; }
.weather div { margin-top: -3px; }
.weather span { color: #c4c4c4; letter-spacing: 0; }
.dock { display: flex; gap: 5px; padding-top: 4px; }
.app { width: 50px; height: 50px; padding: 10px; position: relative; border-radius: 5px; }
.app:first-child { width: 66px; padding-left: 17px; margin-right: -7px; }
.search + .app { margin-left: 1px; }
.app > svg { width: 30px; height: 30px; }
.search { width: 125px; height: 40px; margin: 5px 1px 0 0; border-radius: 20px; background: rgba(255, 255, 255, .08); border: 1px solid rgba(255, 255, 255, .05); display: flex; align-items: center; gap: 6px; padding-left: 28px; }
.search svg { width: 18px; height: 18px; }
.run::after { content: ""; position: absolute; left: 21px; bottom: 1px; width: 8px; height: 4px; border-radius: 2px; background: #9a9a9a; }
.current { background: #2d2d2d; box-shadow: inset 0 0 0 1px #3a3a3a, inset -6px 0 0 -1px #262626; }
.current::after { left: 15px; width: 20px; background: #d9a0e0; }
.badge { position: absolute; left: 25px; top: 4px; width: 20px; height: 20px; border-radius: 50%; background: #00473c; color: #bfe5dc; font: 600 11px/20px "Open Sans", sans-serif; text-align: center; overflow: hidden; }
.badge svg { width: 20px; height: 20px; }
.tray { display: flex; margin-left: auto; padding: 0 26px 0 0; align-items: center; }
.tray svg { fill: none; stroke: #fff; stroke-width: 1.400; }
.chev { width: 14px; height: 14px; margin-right: 25px; }
.lang { align-items: center; width: 32px; margin-bottom: 1px; }
.tr { width: 20px; height: 20px; }
.lang + .tr { margin-left: 21px; }
.tr + .tr { margin-left: 10px; }
.clock { align-items: flex-end; width: 90px; letter-spacing: 0; margin-bottom: 2px; }
.tray .bell { width: 18px; height: 20px; margin-left: 10px; stroke: none; }
```
